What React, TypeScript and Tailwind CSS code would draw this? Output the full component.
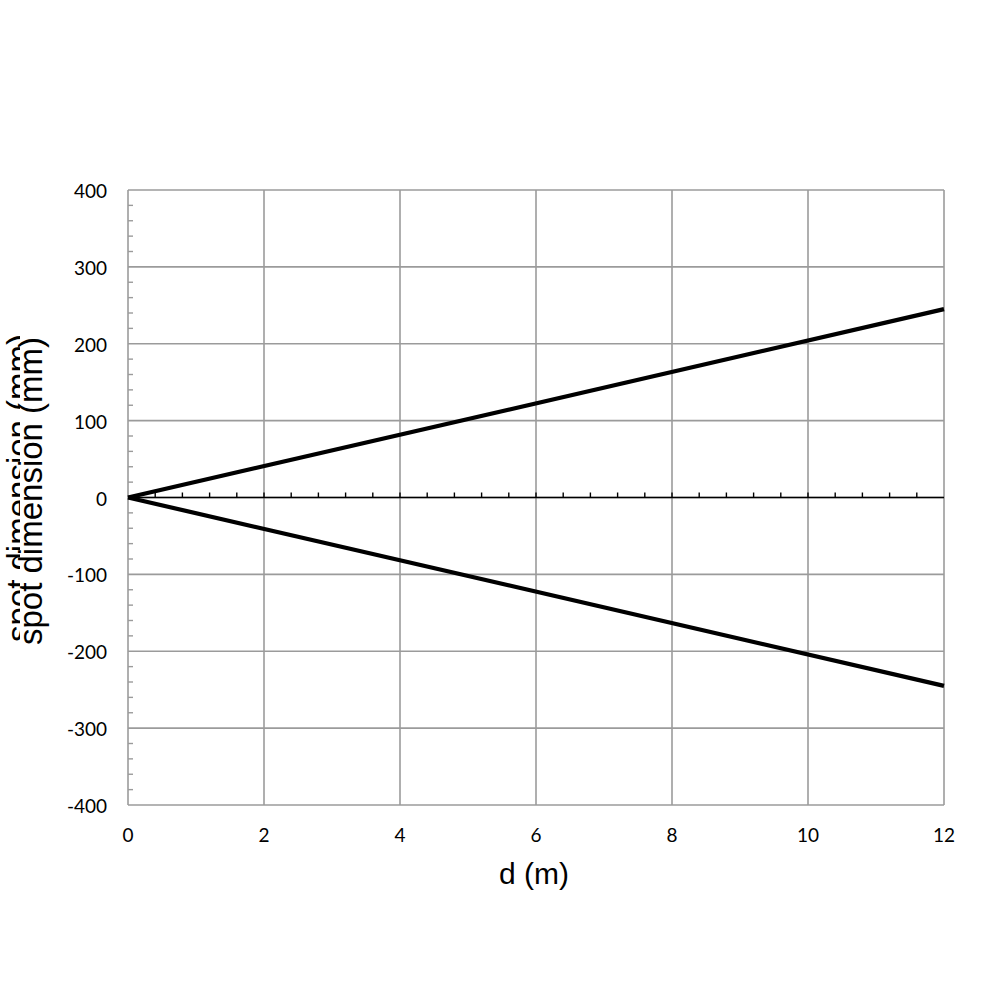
import React from "react";

// plot frame in page pixels
const X0 = 128;
const X1 = 944;
const Y_TOP = 190;
const Y_BOT = 805;

const xPx = (d: number) => X0 + ((X1 - X0) * d) / 12;
const yPx = (v: number) => Y_TOP + ((400 - v) * (Y_BOT - Y_TOP)) / 800;

const yMajors = [400, 300, 200, 100, 0, -100, -200, -300, -400];
const xMajors = [0, 2, 4, 6, 8, 10, 12];

const yMinors: number[] = [];
for (let v = -400; v < 400; v += 20) if (v % 100 !== 0) yMinors.push(v);

const xMinors: number[] = [];
for (let i = 1; i < 30; i++) xMinors.push(i * 0.4);

const SLOPE = 245 / 12; // mm per m

export default function App() {
  return (
    <div className="w-[1000px] h-[1000px] bg-white">
      <svg width={1000} height={1000} viewBox="0 0 1000 1000">
        {/* grid */}
        {xMajors.map((d) => (
          <line key={"gx" + d} x1={xPx(d)} x2={xPx(d)} y1={Y_TOP} y2={Y_BOT} stroke="#9b9b9b" strokeWidth={1.6} />
        ))}
        {yMajors.map((v) => (
          <line key={"gy" + v} x1={X0} x2={X1} y1={yPx(v)} y2={yPx(v)} stroke="#9b9b9b" strokeWidth={1.6} />
        ))}
        {yMinors.map((v) => (
          <line key={"my" + v} x1={X0} x2={X0 + 5} y1={yPx(v)} y2={yPx(v)} stroke="#9b9b9b" strokeWidth={1.4} />
        ))}

        {/* zero axis */}
        <line x1={X0} x2={X1} y1={yPx(0)} y2={yPx(0)} stroke="#000" strokeWidth={1.5} />
        {xMinors.map((d) => (
          <line key={"mx" + d} x1={xPx(d)} x2={xPx(d)} y1={yPx(0)} y2={yPx(0) - 5} stroke="#000" strokeWidth={1.4} />
        ))}

        {/* series */}
        <line x1={xPx(0)} y1={yPx(0)} x2={xPx(12)} y2={yPx(12 * SLOPE)} stroke="#000" strokeWidth={4.2} />
        <line x1={xPx(0)} y1={yPx(0)} x2={xPx(12)} y2={yPx(-12 * SLOPE)} stroke="#000" strokeWidth={4.2} />

        {/* tick labels */}
        {yMajors.map((v) => (
          <text
            key={"ly" + v}
            x={107}
            y={yPx(v) + 8}
            textAnchor="end"
            className="font-['Lato','Open_Sans',sans-serif] text-[19px] fill-black"
          >
            {v}
          </text>
        ))}
        {xMajors.map((d) => (
          <text
            key={"lx" + d}
            x={xPx(d)}
            y={842}
            textAnchor="middle"
            className="font-['Lato','Open_Sans',sans-serif] text-[19px] fill-black"
          >
            {d}
          </text>
        ))}

        {/* axis titles */}
        <text
          x={534}
          y={884}
          textAnchor="middle"
          className="font-['Liberation_Sans',Arial,sans-serif] text-[30px] fill-black"
        >
          d (m)
        </text>

        <text
          transform="translate(30 488) rotate(-90)"
          textAnchor="middle"
          className="font-['Liberation_Sans',Arial,sans-serif] text-[33px] fill-black"
        >
          spot dimension (mm)
        </text>
        <rect x={20} y={325} width={32} height={330} fill="#fff" />
        <text
          transform="translate(42 491) rotate(-90)"
          textAnchor="middle"
          className="font-['Liberation_Sans',Arial,sans-serif] text-[33px] fill-black"
        >
          spot dimension (mm)
        </text>
      </svg>
    </div>
  );
}
